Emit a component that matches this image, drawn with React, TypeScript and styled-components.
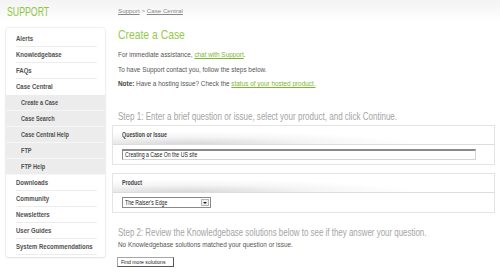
import React from 'react';
import styled, { createGlobalStyle } from 'styled-components';

const GlobalStyle = createGlobalStyle`
  html, body {
    margin: 0;
    padding: 0;
    background: #fff;
  }
  body {
    width: 500px;
    height: 272px;
    overflow: hidden;
    font-family: "Liberation Sans", Arial, sans-serif;
    color: #444;
  }
`;

// condensed look: Helvetica-like face squeezed horizontally
const Squeeze = styled.span<{ $x: number }>`
  display: inline-block;
  white-space: nowrap;
  transform: scaleX(${(p) => p.$x});
  transform-origin: 0 50%;
`;

const Page = styled.div`
  display: flex;
  flex-direction: row;
  width: 500px;
  height: 272px;
  overflow: hidden;
  background: linear-gradient(to bottom, #f3f3f3 0px, #ffffff 22px);
`;

const Side = styled.div`
  width: 99px;
  flex: none;
  padding-left: 6px;
  display: flex;
  flex-direction: column;
`;

const Brand = styled.div`
  height: 28px;
  font-size: 12.5px;
  line-height: 24px;
  color: #8dc63f;
  padding-left: 1px;
`;

const Menu = styled.div`
  background: #fff;
  box-shadow: 0 0 2px rgba(0, 0, 0, 0.18), 0 1px 2px rgba(0, 0, 0, 0.08);
  border-radius: 2px;
  padding: 3px 0 2px;
  overflow: hidden;
`;

const MenuItem = styled.div<{ $last?: boolean }>`
  height: 16px;
  margin: 0 8px 0 10px;
  border-bottom: 1px solid ${(p) => (p.$last ? 'transparent' : '#ececec')};
  box-sizing: border-box;
  font-weight: bold;
  font-size: 7.5px;
  line-height: 16px;
  color: #505050;
`;

const SubMenu = styled.div`
  background: #ececec;
`;

const SubItem = styled.div`
  height: 16px;
  padding-left: 15px;
  border-bottom: 1px solid #f6f6f6;
  box-sizing: border-box;
  font-weight: bold;
  font-size: 7px;
  line-height: 16px;
  color: #505050;
`;

const Main = styled.div`
  flex: 1;
  min-width: 0;
  padding: 0 5px 0 7px;
  display: flex;
  flex-direction: column;
`;

const Crumbs = styled.div`
  height: 21px;
  padding-left: 6px;
  font-size: 6.2px;
  line-height: 21px;
  color: #888;
  a {
    color: #888;
    text-decoration: underline;
  }
`;

const Title = styled.h1`
  margin: 0;
  height: 27px;
  padding-left: 6px;
  font-weight: normal;
  font-size: 13.3px;
  line-height: 27px;
  color: #94c94a;
`;

const Para = styled.p`
  margin: 0;
  height: 14.5px;
  padding-left: 6px;
  font-size: 6.4px;
  line-height: 14.5px;
  color: #555;
  white-space: nowrap;
  a {
    color: #7cb82f;
    text-decoration: underline;
  }
  b {
    color: #444;
  }
`;

const StepTitle = styled.h2<{ $top: number }>`
  margin: ${(p) => p.$top}px 0 0;
  height: 10px;
  padding-left: 6px;
  font-weight: normal;
  font-size: 10.5px;
  line-height: 10px;
  color: #a4a4a4;
  white-space: nowrap;
`;

const Panel = styled.div<{ $top: number }>`
  margin-top: ${(p) => p.$top}px;
  border: 1px solid #e4e4e4;
  background: #fff;
  height: 40px;
  box-sizing: border-box;
  display: flex;
  flex-direction: column;
`;

const PanelHead = styled.div`
  height: 18px;
  padding-left: 9px;
  border-bottom: 1px solid #dcdcdc;
  font-weight: bold;
  font-size: 7px;
  line-height: 18px;
  color: #444;
  background:
    radial-gradient(ellipse 60% 70% at 20% 100%, #d8d8d8 0%, rgba(238, 238, 238, 0.6) 55%, rgba(255, 255, 255, 0) 100%),
    #fff;
`;

const PanelBody = styled.div`
  flex: 1;
  display: flex;
  align-items: center;
  padding-left: 9px;
`;

const TextInput = styled.div`
  width: 350px;
  height: 8px;
  border: 1px solid #d4d4d4;
  border-top: 2px solid #8a8a8a;
  border-left: 1px solid #8a8a8a;
  background: #fff;
  font-size: 6.3px;
  line-height: 8px;
  padding-left: 2px;
  color: #222;
`;

const Select = styled.div`
  width: 87px;
  height: 9px;
  border: 1px solid #8a8a8a;
  background: #fff;
  display: flex;
  flex-direction: row;
  font-size: 6.3px;
  line-height: 9px;
  color: #222;
  margin-top: 1px;
`;

const SelectText = styled.span`
  flex: 1;
  min-width: 0;
  padding-left: 2px;
`;

const SelectArrow = styled.span`
  width: 8px;
  margin: 1px;
  border: 1px solid #b5b5b5;
  background: #f0f0f0;
  box-sizing: border-box;
  display: flex;
  align-items: center;
  justify-content: center;
`;

const Note = styled.p`
  margin: 4px 0 0;
  padding-left: 6px;
  font-size: 6.4px;
  line-height: 8px;
  color: #555;
  white-space: nowrap;
`;

const Button = styled.div`
  margin: 8px 0 0 5px;
  width: 52px;
  height: 8px;
  border: 1px solid #a6a6a6;
  border-right-color: #555;
  border-bottom-color: #555;
  background: #fff;
  font-size: 6px;
  line-height: 8px;
  padding-left: 3px;
  color: #222;
  overflow: hidden;
`;

const topItems = ['Alerts', 'Knowledgebase', 'FAQs', 'Case Central'];
const subItems = ['Create a Case', 'Case Search', 'Case Central Help', 'FTP', 'FTP Help'];
const bottomItems = ['Downloads', 'Community', 'Newsletters', 'User Guides', 'System Recommendations'];

export default function App() {
  return (
    <>
      <GlobalStyle />
      <Page>
        <Side>
          <Brand>
            <Squeeze $x={0.7}>SUPPORT</Squeeze>
          </Brand>
          <Menu>
            {topItems.map((t, i) => (
              <MenuItem key={t} $last={i === topItems.length - 1}>
                <Squeeze $x={0.8}>{t}</Squeeze>
              </MenuItem>
            ))}
            <SubMenu>
              {subItems.map((t) => (
                <SubItem key={t}>
                  <Squeeze $x={0.8}>{t}</Squeeze>
                </SubItem>
              ))}
            </SubMenu>
            {bottomItems.map((t) => (
              <MenuItem key={t}>
                <Squeeze $x={0.8}>{t}</Squeeze>
              </MenuItem>
            ))}
          </Menu>
        </Side>
        <Main>
          <Crumbs>
            <a>Support</a> &gt; <a>Case Central</a>
          </Crumbs>
          <Title>
            <Squeeze $x={0.78}>Create a Case</Squeeze>
          </Title>
          <Para>
            For immediate assistance, <a>chat with Support</a>.
          </Para>
          <Para>To have Support contact you, follow the steps below.</Para>
          <Para>
            <b>Note:</b> Have a hosting issue? Check the <a>status of your hosted product.</a>
          </Para>
          <StepTitle $top={19}>
            <Squeeze $x={0.765}>
              Step 1: Enter a brief question or issue, select your product, and click Continue.
            </Squeeze>
          </StepTitle>
          <Panel $top={4}>
            <PanelHead>
              <Squeeze $x={0.76}>Question or Issue</Squeeze>
            </PanelHead>
            <PanelBody>
              <TextInput>
                <Squeeze $x={0.82}>Creating a Case On the US site</Squeeze>
              </TextInput>
            </PanelBody>
          </Panel>
          <Panel $top={8}>
            <PanelHead>
              <Squeeze $x={0.76}>Product</Squeeze>
            </PanelHead>
            <PanelBody>
              <Select>
                <SelectText>
                  <Squeeze $x={0.82}>The Raiser's Edge</Squeeze>
                </SelectText>
                <SelectArrow>
                  <svg width="4" height="2" viewBox="0 0 4 2">
                    <path d="M0 0h4L2 2z" fill="#222" />
                  </svg>
                </SelectArrow>
              </Select>
            </PanelBody>
          </Panel>
          <StepTitle $top={14}>
            <Squeeze $x={0.755}>
              Step 2: Review the Knowledgebase solutions below to see if they answer your question.
            </Squeeze>
          </StepTitle>
          <Note>No Knowledgebase solutions matched your question or issue.</Note>
          <Button>
            <Squeeze $x={0.85}>Find more solutions</Squeeze>
          </Button>
        </Main>
      </Page>
    </>
  );
}
